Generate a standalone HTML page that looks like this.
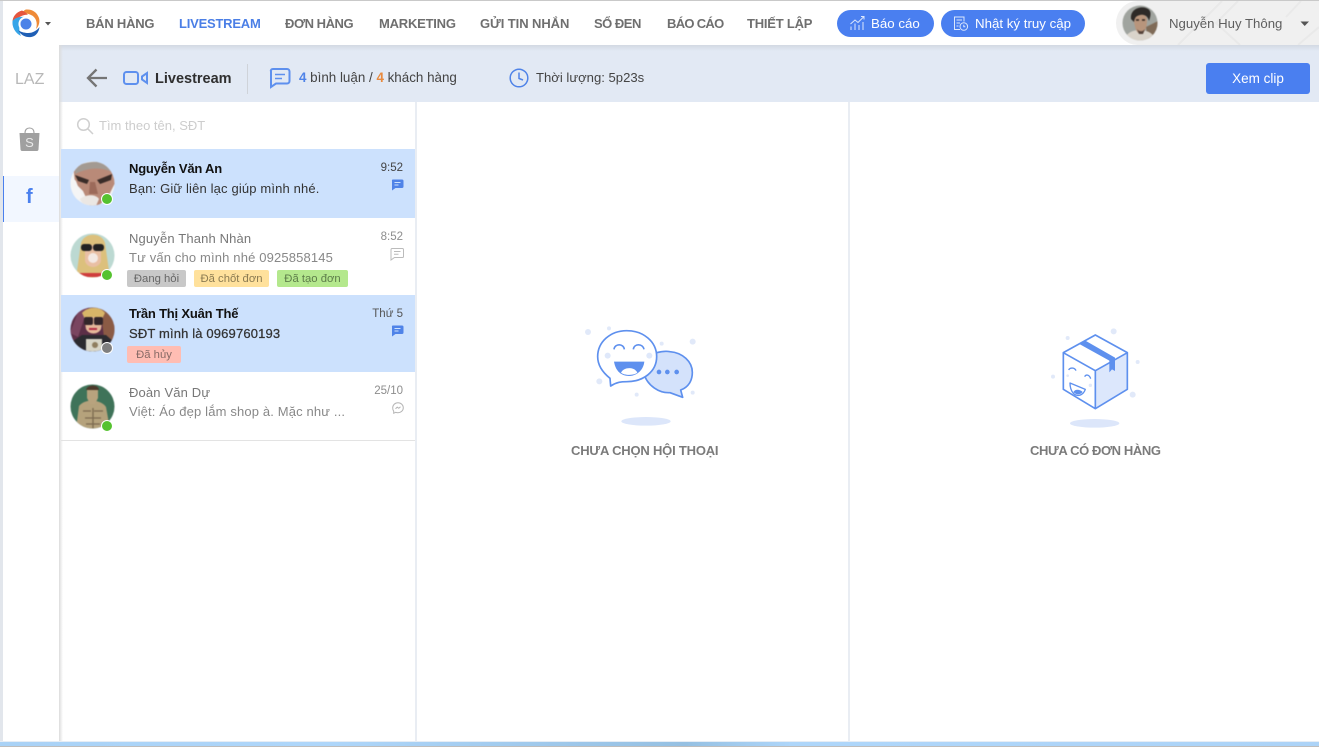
<!DOCTYPE html>
<html lang="vi"><head><meta charset="utf-8"><title>Livestream</title>
<style>
html,body{margin:0;padding:0;width:1319px;height:747px;overflow:hidden;background:#fff;font-family:"Liberation Sans",sans-serif}
.a{position:absolute;white-space:nowrap}
svg{position:absolute;overflow:hidden}
.av{filter:blur(.5px)}
.nav{top:15px;font-size:13px;font-weight:bold;color:#6f6f6f;line-height:17px;letter-spacing:-.22px}
.nm{left:129px;font-size:13px;line-height:16px;color:#777;letter-spacing:.15px}
.ms{left:129px;font-size:13px;line-height:16px;color:#888;letter-spacing:.15px}
.bd{color:#111;font-weight:bold;letter-spacing:-.2px}
.tm{font-size:11.5px;line-height:14px;color:#8d8d8d;text-align:right;right:916px}
.tag{height:17px;line-height:18px;font-size:11.3px;border-radius:2px;text-align:center;color:#777}
.dot{width:12px;height:12px;border-radius:50%;background:#55c22f;border:1px solid #fff;box-sizing:border-box}
.cap{top:442px;font-size:13px;line-height:17px;font-weight:bold;color:#7b7b7b}
</style></head><body>
<div class="a" style="left:0;top:0;width:1319px;height:747px;background:#fff"></div>

<!-- header band -->
<div class="a" style="left:59px;top:46px;width:1260px;height:56px;background:#e2e9f4"></div>
<div class="a" style="left:59px;top:45px;width:1260px;height:6px;background:linear-gradient(#d3d9e3,#e2e9f4)"></div>
<!-- sidebar -->
<div class="a" style="left:59px;top:45px;width:4px;height:696px;background:linear-gradient(90deg,#dcdcdc,rgba(255,255,255,0))"></div>
<div class="a" style="left:3px;top:176px;width:56px;height:46px;background:#f2f7ff"></div>
<div class="a" style="left:3px;top:176px;width:1px;height:46px;background:#4a80ee"></div>
<div class="a" style="left:0;top:0;width:3px;height:742px;background:#e2e6ec"></div>
<div class="a" style="left:0;top:0;width:1319px;height:1px;background:#c9c9c9"></div>

<!-- logo -->
<svg style="left:11px;top:8px;filter:blur(.3px)" width="30" height="31" viewBox="0 0 30 31">
<path d="M15 1.500C21 1 26 4 28 10C29 14 28 18 25 21C27 15 25 9 20 7C17 5.500 14 5 11 6C12 3.500 13 2 15 1.500Z" fill="#ef8a37"/>
<path d="M11 2.500C5 4 1.500 9 1.500 14C1.500 17 2.500 20 5 22C3.500 16 5.500 10 10.500 8C13 7 15 6.500 17 7C15.500 5 13.500 3.500 11 2.500Z" fill="#e5563f"/>
<path d="M1.500 13C1 19 4 25 10 28C8 24 8 19 9 15C10 12 12 10 14 9C9 8.500 4 9.500 1.500 13Z" fill="#36a5e8"/>
<path d="M7 22C10 28 17 30.500 22 28.500C26 27 28 23 28.500 19C26 22.500 21 25.500 16 25C13 24.700 9.500 24 7 22Z" fill="#1f5fb5"/>
<circle cx="15" cy="16" r="5.500" fill="#4b82e8"/><circle cx="15" cy="16" r="6.800" fill="none" stroke="#fff" stroke-width="1.500"/>
</svg>
<svg style="left:44px;top:21px" width="8" height="6"><path d="M1 1H7L4 4.500Z" fill="#555"/></svg>

<div class="a" style="left:15px;top:71px;font-size:16px;line-height:18px;color:#b8b8b8">LAZ</div>
<svg style="left:19px;top:127px" width="22" height="25" viewBox="0 0 22 25">
<path d="M.5 6H20.500L19.500 22.500C19.400 23.500 18.700 24 18 24H3C2.300 24 1.600 23.500 1.500 22.500Z" fill="#a0a0a0"/>
<path d="M6 6C6 2.500 8 1 10.500 1S15 2.500 15 6" fill="none" stroke="#a0a0a0" stroke-width="1.100"/>
<text x="10.500" y="20" font-size="13" fill="#e8e8e8" text-anchor="middle" font-family="Liberation Sans">S</text>
</svg>
<div class="a" style="left:26px;top:187px;font-size:20px;line-height:21px;font-weight:bold;color:#4a80ee">f</div>

<!-- nav -->
<div class="a nav" style="left:86px">BÁN HÀNG</div>
<div class="a nav" style="left:179px;color:#4b7fe6">LIVESTREAM</div>
<div class="a nav" style="left:285px;letter-spacing:-.45px">ĐƠN HÀNG</div>
<div class="a nav" style="left:379px">MARKETING</div>
<div class="a nav" style="left:480px;letter-spacing:-.08px">GỬI TIN NHẮN</div>
<div class="a nav" style="left:594px;letter-spacing:-.5px">SỔ ĐEN</div>
<div class="a nav" style="left:667px;letter-spacing:-.7px">BÁO CÁO</div>
<div class="a nav" style="left:747px">THIẾT LẬP</div>

<!-- pills -->
<div class="a" style="left:837px;top:10px;width:97px;height:27px;border-radius:14px;background:#4a7ff0"></div>
<svg style="left:849px;top:15px" width="17" height="16" viewBox="0 0 17 16" fill="none" stroke="#dce7fc" stroke-width="1">
<path d="M1.500 9L6 5L9 7.500L15 1.500M12 1.500H15V4.500"/><path d="M2 15V11.500M6 15V8.500M10 15V10M14 15V7"/></svg>
<div class="a" style="left:871px;top:16px;font-size:13.3px;line-height:16px;color:#fff">Báo cáo</div>
<div class="a" style="left:941px;top:10px;width:144px;height:27px;border-radius:14px;background:#4a7ff0"></div>
<svg style="left:952px;top:15px" width="17" height="17" viewBox="0 0 17 17" fill="none" stroke="#dce7fc" stroke-width="1">
<path d="M8 14.500H2.500V2H12V6.500M4.500 5H10M4.500 8H8M4.500 11H6.500"/><circle cx="11.800" cy="11.500" r="3.800"/><path d="M11.800 9.800V11.700H13.300"/></svg>
<div class="a" style="left:975px;top:16px;font-size:13.3px;line-height:16px;color:#fff">Nhật ký truy cập</div>

<!-- user area -->
<div class="a" style="left:1116px;top:1px;width:203px;height:44px;background:#f0f0f0;border-radius:22px 0 0 22px"></div>
<svg style="left:1116px;top:1px" width="203" height="44" fill="none" stroke="#e9e9e9" stroke-width="2"><path d="M62 44L106 0M122 0L100 22L124 44M185 0L170 16M182 44L203 26"/></svg>
<svg class="av" style="left:1122px;top:5px" width="36" height="36" viewBox="0 0 36 36">
<defs><clipPath id="cu"><circle cx="18" cy="18" r="17.500"/></clipPath></defs>
<g clip-path="url(#cu)"><rect width="36" height="36" fill="#a0a49f"/>
<path d="M26 36L24 22L36 16V36Z" fill="#7f6b58"/><path d="M2 36C4 27 12 25 18 25S32 28 34 36Z" fill="#d9d3ca"/>
<path d="M12 14C12 7 24 7 25 14C25.500 22 22 29 18.500 29S12 22 12 14Z" fill="#b8957c"/>
<path d="M9 14C8 4 18 1 24 3S29 10 27 16C26 11 22 9 18 10S13 12 12 17Z" fill="#2e2a27"/>
<path d="M14 15H17M20 15H23" stroke="#33261f" stroke-width="1.500"/><path d="M15 24C17 27 21 27 23 24L21 29H17Z" fill="#55433a"/></g></svg>
<div class="a" style="left:1169px;top:16px;font-size:13.2px;line-height:16px;color:#5e5e5e">Nguyễn Huy Thông</div>
<svg style="left:1300px;top:21px" width="10" height="6"><path d="M.5 .5H9L4.700 5Z" fill="#555"/></svg>

<!-- toolbar -->
<svg style="left:86px;top:67px" width="22" height="22" viewBox="0 0 22 22" fill="none" stroke="#757575" stroke-width="2.300"><path d="M21 11H2.500M10.500 2.500L2 11L10.500 19.500"/></svg>
<svg style="left:123px;top:69px" width="26" height="18" viewBox="0 0 26 18" fill="none" stroke="#5e90ee" stroke-width="2">
<rect x="1" y="3" width="14" height="12" rx="2.500"/><path d="M19 7.500L24 4V14L19 10.500Z"/></svg>
<div class="a" style="left:155px;top:70px;font-size:14.5px;line-height:18px;color:#2f2f2f;font-weight:bold">Livestream</div>
<div class="a" style="left:247px;top:64px;width:1px;height:30px;background:#cfd3d9"></div>
<svg style="left:269px;top:67px" width="22" height="22" viewBox="0 0 22 22" fill="none" stroke="#5e90ee" stroke-width="2">
<path d="M4 2H18C19.500 2 20.500 3 20.500 4.500V14C20.500 15.500 19.500 16.500 18 16.500H7L2 20V4.500C1.500 3 2.500 2 4 2Z"/><path d="M6 7.500H16M6 11.500H13" stroke-width="1.600"/></svg>
<div class="a" style="left:299px;top:69px;font-size:13.4px;line-height:17px;color:#444"><b style="color:#4f83e8">4</b> bình luận / <b style="color:#e98a3e">4</b> khách hàng</div>
<svg style="left:509px;top:68px" width="20" height="20" viewBox="0 0 20 20" fill="none" stroke="#4f83e8" stroke-width="1.500"><circle cx="10" cy="10" r="8.800"/><path d="M10 4.500V10.500L14 12"/></svg>
<div class="a" style="left:536px;top:69px;font-size:13.1px;line-height:17px;color:#444">Thời lượng: 5p23s</div>
<div class="a" style="left:1206px;top:63px;width:104px;height:31px;border-radius:3px;background:#4a7ff0;color:#fff;font-size:13.5px;line-height:31px;text-align:center">Xem clip</div>

<!-- column dividers -->
<div class="a" style="left:415px;top:102px;width:2px;height:639px;background:#e9edf3"></div>
<div class="a" style="left:848px;top:102px;width:2px;height:639px;background:#e9edf3"></div>

<!-- search -->
<svg style="left:76px;top:117px" width="18" height="18" viewBox="0 0 18 18" fill="none" stroke="#cfcfcf" stroke-width="1.500"><circle cx="7.500" cy="7.500" r="5.800"/><path d="M11.800 11.800L17 17"/></svg>
<div class="a" style="left:99px;top:117px;font-size:13px;line-height:17px;color:#cdcdcd">Tìm theo tên, SĐT</div>

<!-- rows -->
<div class="a" style="left:61px;top:149px;width:354px;height:69px;background:#cce1fd"></div>
<div class="a" style="left:61px;top:295px;width:354px;height:77px;background:#cce1fd"></div>
<div class="a" style="left:61px;top:440px;width:354px;height:1px;background:#e3e3e3"></div>

<!-- row 1 -->
<svg class="av" style="left:70px;top:161px" width="45" height="45" viewBox="0 0 45 45">
<defs><clipPath id="c1"><circle cx="22.500" cy="22.500" r="22"/></clipPath></defs>
<g clip-path="url(#c1)"><rect width="45" height="45" fill="#f3f3f3"/>
<path d="M3 3H45V22L38 36L28 45H20L13 30L5 22Z" fill="#b98a78"/>
<path d="M5 6C18 -1 34 -1 45 6L44 12C30 5 18 7 5 13Z" fill="#a39a92"/>
<path d="M5 14L19 19L17 23L8 20ZM42 13L27 19L30 23L41 19Z" fill="#3a2c28"/>
<path d="M20 21L19 33H28L25 21Z" fill="#9c6a5a"/><path d="M10 38C16 33 26 33 29 38L26 45H14Z" fill="#ebe7e3"/>
<path d="M0 14L6 20L12 36L0 45Z" fill="#f5f5f5"/></g></svg>
<div class="a dot" style="left:101px;top:193px"></div>
<div class="a nm bd" style="top:161px">Nguyễn Văn An</div>
<div class="a ms" style="top:181px;color:#333">Bạn: Giữ liên lạc giúp mình nhé.</div>
<div class="a tm" style="top:161px;color:#444">9:52</div>
<svg style="left:391px;top:179px" width="13" height="12" viewBox="0 0 13 12"><path d="M2 .5H11C12 .5 12.500 1 12.500 2V7.500C12.500 8.500 12 9 11 9H4.500L1 11.500V2C.8 1 1 .5 2 .5Z" fill="#4f83e8"/><path d="M3.500 3.500H9.500M3.500 6H7.500" stroke="#cce1fd"/></svg>

<!-- row 2 -->
<svg class="av" style="left:70px;top:233px" width="45" height="45" viewBox="0 0 45 45">
<defs><clipPath id="c2"><circle cx="22.500" cy="22.500" r="22"/></clipPath></defs>
<g clip-path="url(#c2)"><rect width="45" height="45" fill="#bcd9d2"/>
<path d="M6 45L11 10C14 -1 32 -1 35 10L40 45Z" fill="#dcc07c"/>
<path d="M15 12H31V28C29 36 17 36 15 28Z" fill="#e9bfa4"/>
<rect x="11" y="11" width="11" height="7" rx="3" fill="#222"/><rect x="23" y="11" width="11" height="7" rx="3" fill="#222"/>
<circle cx="23" cy="25" r="5" fill="#f3e9e4"/>
<rect x="8" y="40" width="30" height="4" fill="#cf3d3d"/></g></svg>
<div class="a dot" style="left:101px;top:269px"></div>
<div class="a nm" style="top:231px">Nguyễn Thanh Nhàn</div>
<div class="a ms" style="top:250px">Tư vấn cho mình nhé 0925858145</div>
<div class="a tm" style="top:230px">8:52</div>
<svg style="left:390px;top:248px" width="14" height="13" viewBox="0 0 14 13" fill="none" stroke="#bbb"><path d="M2 .5H12.500C13 .5 13.500 1 13.500 2V8.500C13.500 9.300 13 9.500 12.500 9.500H4.500L1 12V2C1 1 1.300 .5 2 .5Z"/><path d="M4 3.500H10.500M4 6.200H8.500"/></svg>
<div class="a tag" style="left:127px;top:270px;width:59px;background:#c8c8c8;color:#666">Đang hỏi</div>
<div class="a tag" style="left:194px;top:270px;width:75px;background:#ffe19c;color:#8b7b52">Đã chốt đơn</div>
<div class="a tag" style="left:277px;top:270px;width:71px;background:#b4e88d;color:#5d7d4a">Đã tạo đơn</div>

<!-- row 3 -->
<svg class="av" style="left:70px;top:307px" width="45" height="45" viewBox="0 0 45 45">
<defs><clipPath id="c3"><circle cx="22.500" cy="22.500" r="22"/></clipPath></defs>
<g clip-path="url(#c3)"><rect width="45" height="45" fill="#5c2f47"/>
<path d="M30 0H45V40L34 30Z" fill="#8b5b45"/><path d="M0 26L10 0H18L8 30Z" fill="#7a4560"/>
<path d="M14 10C15 2 31 2 33 10L31 22C28 28 19 28 16 22Z" fill="#e5b89a"/>
<path d="M12 6C18 -1 30 -1 35 6L33 10H14Z" fill="#d8b568"/>
<rect x="14" y="10" width="9" height="8" rx="2" fill="#33262a"/><rect x="24" y="10" width="9" height="8" rx="2" fill="#33262a"/>
<rect x="19" y="21" width="8" height="2" fill="#b52c45"/>
<path d="M0 45V36L12 28H36L45 36V45Z" fill="#2b2b30"/><rect x="16" y="32" width="16" height="13" fill="#d8d6c8"/><circle cx="25" cy="38" r="3" fill="#8f7e5f"/></g></svg>
<div class="a dot" style="left:101px;top:342px;background:#7f7f7f"></div>
<div class="a nm bd" style="top:306px">Trần Thị Xuân Thế</div>
<div class="a ms" style="top:326px;color:#333;-webkit-text-stroke:.25px #333">SĐT mình là 0969760193</div>
<div class="a tm" style="top:307px;color:#555">Thứ 5</div>
<svg style="left:391px;top:325px" width="13" height="12" viewBox="0 0 13 12"><path d="M2 .5H11C12 .5 12.500 1 12.500 2V7.500C12.500 8.500 12 9 11 9H4.500L1 11.500V2C.8 1 1 .5 2 .5Z" fill="#4f83e8"/><path d="M3.500 3.500H9.500M3.500 6H7.500" stroke="#cce1fd"/></svg>
<div class="a tag" style="left:127px;top:346px;width:54px;background:#ffbdb3;color:#876a66">Đã hủy</div>

<!-- row 4 -->
<svg class="av" style="left:70px;top:384px" width="45" height="45" viewBox="0 0 45 45">
<defs><clipPath id="c4"><circle cx="22.500" cy="22.500" r="22"/></clipPath></defs>
<g clip-path="url(#c4)"><rect width="45" height="45" fill="#3f7359"/>
<path d="M6 45L9 22C13 17 19 17 22 16C26 17 33 18 36 23L40 45Z" fill="#b5a27c"/>
<path d="M17 4H28V14L25 20H20L17 14Z" fill="#b8a37e"/><path d="M16 6C17 0 29 0 29 6Z" fill="#4b3a2b"/>
<path d="M13 27H21M24 27H33M15 34H31M16 40H30M23 24V45" stroke="#7b6a4f" stroke-width="1.300"/></g></svg>
<div class="a dot" style="left:101px;top:420px"></div>
<div class="a nm" style="top:385px">Đoàn Văn Dự</div>
<div class="a ms" style="top:404px">Việt: Áo đẹp lắm shop à. Mặc như ...</div>
<div class="a tm" style="top:384px">25/10</div>
<svg style="left:392px;top:402px" width="12" height="12" viewBox="0 0 12 12" fill="none" stroke="#b5b5b5"><path d="M6 .8C9 .8 11.300 3 11.300 5.800S9 10.700 6 10.700C5.200 10.700 4.500 10.600 3.800 10.300L1.700 11.200V9.200C.9 8.300 .7 7 .7 5.800C.7 3 3 .8 6 .8Z"/><path d="M3.500 6.800L5.200 5.200L6.800 6.300L8.500 4.800"/></svg>

<!-- chat illustration -->
<svg style="left:560px;top:310px" width="170" height="125" viewBox="0 0 510 375">
<g fill="#e1e9f9"><circle cx="84" cy="66" r="9"/><circle cx="147" cy="55" r="6"/><circle cx="305" cy="101" r="6"/><circle cx="398" cy="95" r="9"/><circle cx="118" cy="214" r="9"/><circle cx="230" cy="254" r="6"/><circle cx="398" cy="248" r="6"/></g>
<path d="M290 128C305 124 320 123 330 125C368 128 397 155 397 187C397 212 385 232 362 240L368 262L330 248C295 250 265 225 255 200Z" fill="#d4e2fb" stroke="#5e90ee" stroke-width="5" stroke-linejoin="round"/>
<path d="M150 205C125 185 113 165 113 140C113 95 152 62 200 62C250 62 290 95 290 140C290 185 250 215 200 215C185 215 170 216 152 228Z" fill="#fff" stroke="#5e90ee" stroke-width="5" stroke-linejoin="round"/>
<path d="M162 118C165 100 190 100 193 118M220 118C223 100 248 100 252 118" fill="none" stroke="#5e90ee" stroke-width="5"/>
<path d="M162 155H253C250 185 225 198 207 198C185 198 167 185 162 155Z" fill="#5e90ee"/><path d="M183 188C192 170 224 170 232 188C222 197 193 197 183 188Z" fill="#fff"/>
<g fill="#5e90ee"><circle cx="297" cy="186" r="7"/><circle cx="322" cy="186" r="7"/><circle cx="350" cy="186" r="7"/></g>
<circle cx="143" cy="137" r="9" fill="#dfe8fa"/><circle cx="268" cy="137" r="9" fill="#dfe8fa"/>
<ellipse cx="258" cy="334" rx="74" ry="13" fill="#dce6fa"/>
</svg>
<div class="a cap" style="left:571px;letter-spacing:-.2px">CHƯA CHỌN HỘI THOẠI</div>

<!-- box illustration -->
<svg style="left:1020px;top:310px" width="170" height="125" viewBox="0 0 510 375">
<g fill="#e1e9f9"><circle cx="143" cy="84" r="6"/><circle cx="281" cy="64" r="9"/><circle cx="353" cy="156" r="6"/><circle cx="99" cy="200" r="6"/><circle cx="338" cy="254" r="9"/><circle cx="211" cy="226" r="5"/><circle cx="143" cy="197" r="4"/></g>
<path d="M226 182L322 128V238L226 296Z" fill="#dce7fc"/>
<path d="M226 75L322 128V238L226 296L130 238V128Z" fill="none" stroke="#5e90ee" stroke-width="5" stroke-linejoin="round"/>
<path d="M130 128L226 182L322 128M226 182V296" fill="none" stroke="#5e90ee" stroke-width="5"/>
<path d="M178 102L196 92L285 143V183L276 178L268 187V152Z" fill="#5e90ee"/>
<path d="M146 180C150 172 164 172 168 182M194 200C198 192 208 194 212 206" fill="none" stroke="#5e90ee" stroke-width="4"/>
<path d="M150 219L196 238C190 256 172 262 160 250C154 243 150 232 150 219Z" fill="#fff" stroke="#5e90ee" stroke-width="4" stroke-linejoin="round"/><path d="M160 246C166 236 180 238 188 246C180 256 168 255 160 246Z" fill="#5e90ee"/>
<ellipse cx="224" cy="340" rx="74" ry="13" fill="#dce6fa"/>
</svg>
<div class="a cap" style="left:1030px;letter-spacing:-.4px">CHƯA CÓ ĐƠN HÀNG</div>

<!-- bottom strip -->
<div class="a" style="left:0;top:741px;width:1319px;height:1px;background:#e6edf5"></div>
<div class="a" style="left:0;top:742px;width:1319px;height:5px;background:linear-gradient(90deg,#a9d2f6 0,#aed6fa 25%,#95c0e2 52%,#aed6fa 60%,#acd3f7 100%)"></div>
<div class="a" style="left:0;top:746px;width:1319px;height:1px;background:#bdbdbd"></div>
</body></html>
